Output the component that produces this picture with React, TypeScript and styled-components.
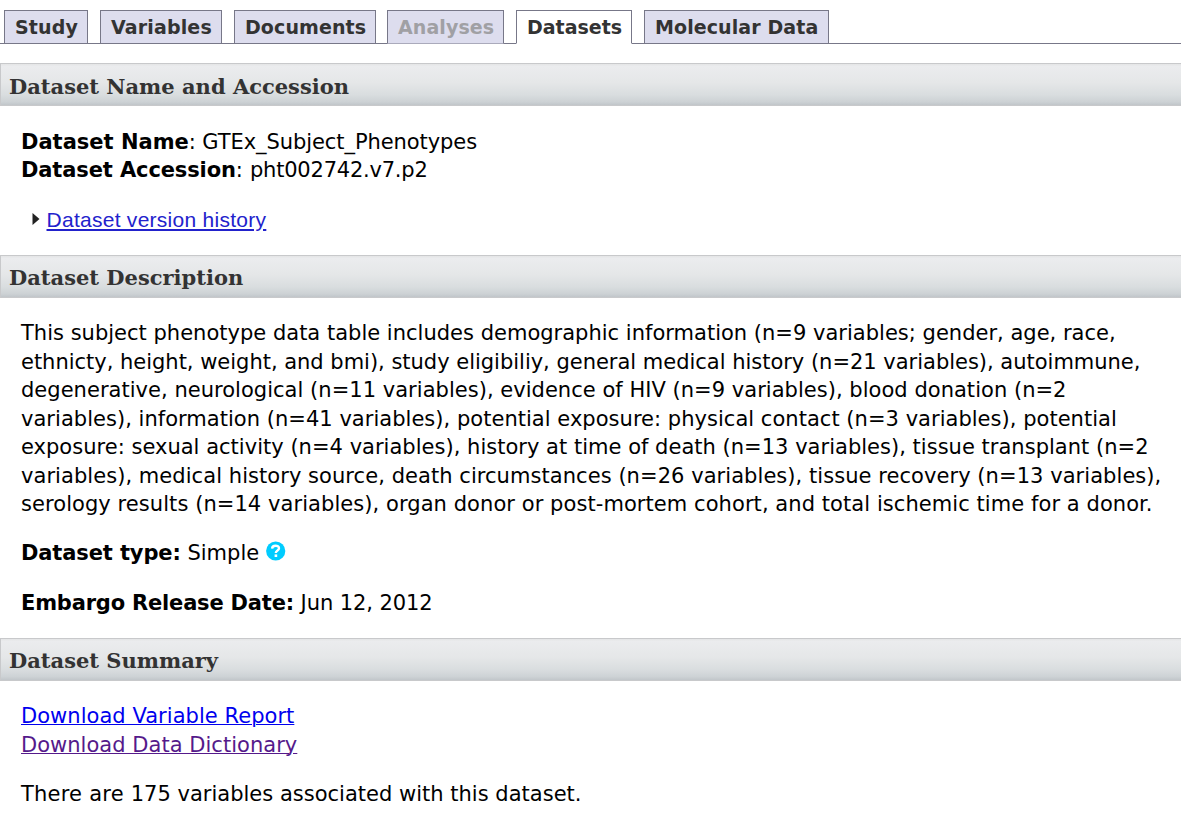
import React from "react";
import styled, { createGlobalStyle } from "styled-components";

const GlobalStyle = createGlobalStyle`
  body {
    margin: 0;
    background: #fff;
    color: #000;
    font-family: "DejaVu Sans", sans-serif;
    font-size: 21px;
    line-height: 28.5px;
  }
`;

const Page = styled.main`
  height: 818px;
  overflow: hidden;
`;

const TabBar = styled.nav`
  display: flex;
  height: 44px;
  margin-bottom: 19px;
  padding: 10px 0 0 4px;
  box-sizing: border-box;
  box-shadow: inset 0 -1px 0 #778;
  white-space: nowrap;
`;

const Tab = styled.a<{ $width: number; $gap?: number; $track?: number; $state?: "active" | "disabled" }>`
  box-sizing: border-box;
  width: ${(p) => p.$width}px;
  height: 34px;
  margin-right: ${(p) => p.$gap ?? 12}px;
  padding-left: 10px;
  border: 1px solid #778;
  border-bottom-color: ${(p) =>
    p.$state === "active" ? "#fff" : p.$state === "disabled" ? "#aab" : "#778"};
  background: ${(p) => (p.$state === "active" ? "#fff" : "#dde")};
  color: ${(p) => (p.$state === "disabled" ? "#a0a0a4" : "#333")};
  font-size: 19px;
  font-weight: bold;
  letter-spacing: ${(p) => p.$track ?? 0}px;
  line-height: 32px;
`;

const SectionTitle = styled.h3<{ $line?: number }>`
  box-sizing: border-box;
  height: 43px;
  margin: 0;
  padding-left: 8px;
  border: 1px solid #c8c9cb;
  border-right: 0;
  background: linear-gradient(#e4e5e6 0%, #ebecee 6%, #e5e7e8 45%, #d9dddf 75%, #cdd2d5 92%, #c1c6ca 100%);
  color: #333;
  font: bold 21px "DejaVu Serif", serif;
  line-height: ${(p) => p.$line ?? 43}px;
`;

const SectionBody = styled.section<{ $height: number }>`
  box-sizing: border-box;
  height: ${(p) => p.$height}px;
  padding: 21px 0 0 21px;
`;

const Paragraph = styled.p<{ $after?: number }>`
  margin: 0 0 ${(p) => p.$after ?? 21}px;
`;

const Names = styled.p`
  margin: 0 0 21px;
  padding-top: 1px;
  line-height: 28px;
`;

const Line = styled.span<{ $track: number }>`
  display: block;
  letter-spacing: ${(p) => p.$track}px;
  white-space: nowrap;
`;

const Run = styled.span<{ $track: number }>`
  letter-spacing: ${(p) => p.$track}px;
`;

const Label = styled.b<{ $track?: number }>`
  letter-spacing: ${(p) => p.$track ?? 0}px;
`;

const HistoryRow = styled.div`
  display: flex;
  align-items: center;
  gap: 6.5px;
  padding: 1px 0 0 11px;
  font-family: "Liberation Sans", sans-serif;
`;

const Arrow = styled.svg`
  width: 8px;
  height: 12px;
  margin-bottom: 2px;
`;

const Link = styled.a<{ $color: string; $track: number; $thin?: boolean }>`
  color: ${(p) => p.$color};
  letter-spacing: ${(p) => p.$track}px;
  text-decoration: underline;
  text-decoration-thickness: ${(p) => (p.$thin ? "1px" : "auto")};
`;

const HelpIcon = styled.svg`
  width: 20px;
  height: 20px;
  margin: -6px 0;
  vertical-align: 5px;
`;

const tabs: {
  label: string;
  width: number;
  gap?: number;
  track?: number;
  state?: "active" | "disabled";
}[] = [
  { label: "Study", width: 84, track: 0.15 },
  { label: "Variables", width: 122, track: 0.15 },
  { label: "Documents", width: 142, gap: 11, track: 0.1 },
  { label: "Analyses", width: 117, track: 0.1, state: "disabled" },
  { label: "Datasets", width: 116, state: "active" },
  { label: "Molecular Data", width: 185, track: 0.1 },
];

const description: [string, number][] = [
  ["This subject phenotype data table includes demographic information (n=9 variables; gender, age, race,", 0.01],
  ["ethnicty, height, weight, and bmi), study eligibiliy, general medical history (n=21 variables), autoimmune,", -0.015],
  ["degenerative, neurological (n=11 variables), evidence of HIV (n=9 variables), blood donation (n=2", 0.028],
  ["variables), information (n=41 variables), potential exposure: physical contact (n=3 variables), potential", 0.028],
  ["exposure: sexual activity (n=4 variables), history at time of death (n=13 variables), tissue transplant (n=2", 0.018],
  ["variables), medical history source, death circumstances (n=26 variables), tissue recovery (n=13 variables),", 0.055],
  ["serology results (n=14 variables), organ donor or post-mortem cohort, and total ischemic time for a donor.", 0.066],
];

export default function App() {
  return (
    <Page>
      <GlobalStyle />
      <TabBar>
        {tabs.map((t) => (
          <Tab key={t.label} $width={t.width} $gap={t.gap} $track={t.track} $state={t.state}>
            {t.label}
          </Tab>
        ))}
      </TabBar>
      <SectionTitle $line={45}>Dataset Name and Accession</SectionTitle>
      <SectionBody $height={149}>
        <Names>
          <Label>Dataset Name</Label>
          <Run $track={-0.08}>: GTEx_Subject_Phenotypes</Run>
          <br />
          <Label $track={-0.12}>Dataset Accession</Label>
          <Run $track={0.2}>: </Run>
          <Run $track={-0.22}>pht002742.v7.p2</Run>
        </Names>
        <HistoryRow>
          <Arrow viewBox="0 0 8 12">
            <path d="M0.5 0L7.5 6L0.5 12Z" fill="#222" />
          </Arrow>
          <Link $color="#2222cc" $track={0.27}>
            Dataset version history
          </Link>
        </HistoryRow>
      </SectionBody>
      <SectionTitle>Dataset Description</SectionTitle>
      <SectionBody $height={340}>
        <Paragraph $after={20}>
          {description.map(([text, track]) => (
            <Line key={text} $track={track}>
              {text}
            </Line>
          ))}
        </Paragraph>
        <Paragraph $after={22}>
          <Label $track={-0.12}>Dataset type:</Label> Simple{" "}
          <HelpIcon viewBox="0 0 20 20">
            <circle cx="9.7" cy="10" r="9.6" fill="#00ccff" />
            <path
              d="M6.1 7.6C6.2 3.8 13 3.8 13 7.3C13 9.6 9.8 9.3 9.8 12"
              fill="none"
              stroke="#fff"
              strokeWidth="2.4"
            />
            <rect x="8.6" y="13.4" width="2.6" height="2.6" fill="#fff" />
          </HelpIcon>
        </Paragraph>
        <Paragraph>
          <Label $track={-0.19}>Embargo Release Date:</Label>
          <Run $track={-0.08}> Jun 12, 2012</Run>
        </Paragraph>
      </SectionBody>
      <SectionTitle>Dataset Summary</SectionTitle>
      <SectionBody $height={137}>
        <Paragraph>
          <Link $color="#0000ee" $track={0.04} $thin>
            Download Variable Report
          </Link>
          <br />
          <Link $color="#551a8b" $track={0.03} $thin>
            Download Data Dictionary
          </Link>
        </Paragraph>
        <Paragraph>
          <Run $track={0.22}>There are </Run>
          <Run $track={0.01}>175 variables associated with this dataset.</Run>
        </Paragraph>
      </SectionBody>
    </Page>
  );
}
